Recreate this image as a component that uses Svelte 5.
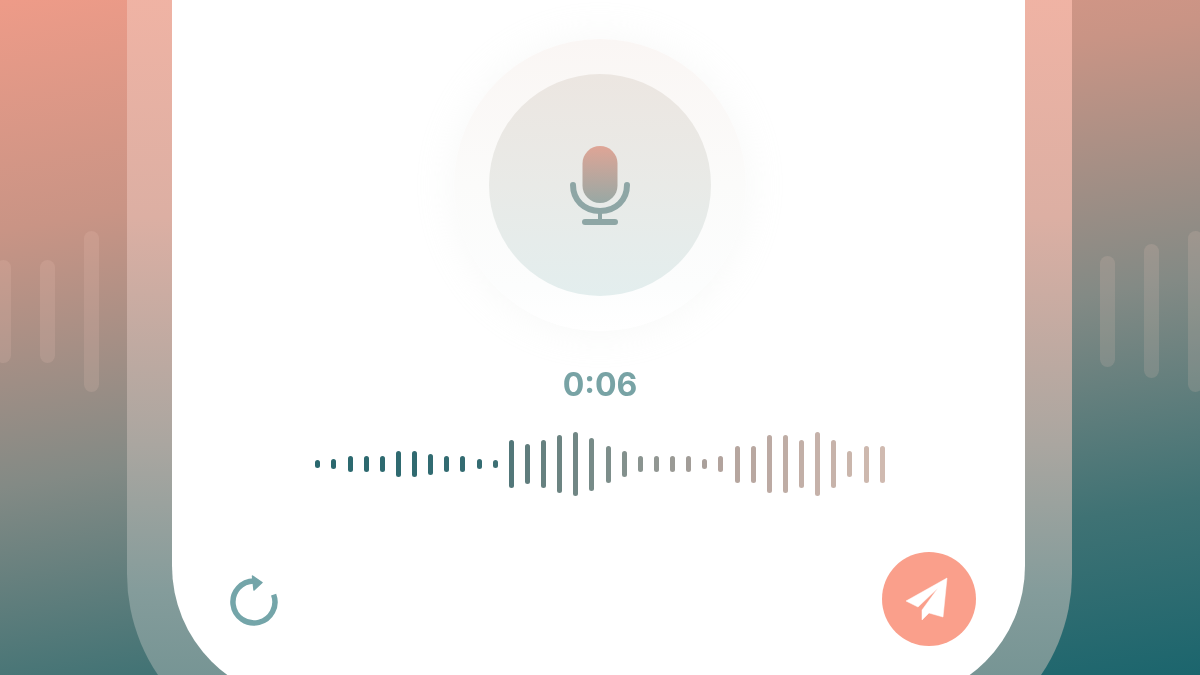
<script lang="ts">
  const leftBars = [103, 103, 161];
  const rightBars = [111, 134, 161];
  const wave = [
    8, 10, 16, 16, 16, 26, 26, 21, 16, 16, 10, 8, 48, 40, 48, 58, 64, 53, 37, 26, 16, 16, 16, 16, 10, 16,
    37, 37, 58, 58, 48, 64, 48, 26, 37, 37
  ];

  // colour stops along the waveform, teal to dusty pink
  const stops = [
    [0, 42, 104, 110],
    [0.3, 52, 108, 114],
    [0.36, 94, 124, 124],
    [0.55, 132, 146, 142],
    [0.72, 180, 164, 158],
    [1, 208, 186, 176]
  ];

  function barColor(t: number) {
    for (let i = 1; i < stops.length; i++) {
      const a = stops[i - 1];
      const b = stops[i];
      if (t <= b[0]) {
        const k = (t - a[0]) / (b[0] - a[0]);
        const c = [1, 2, 3].map((n) => Math.round(a[n] + (b[n] - a[n]) * k));
        return `rgb(${c.join(",")})`;
      }
    }
    return "#d0bab0";
  }
</script>

<div class="stage">
  <div class="side left">
    {#each leftBars as h}
      <span class="side-bar" style="height: {h}px"></span>
    {/each}
  </div>

  <div class="phone">
    <div class="screen">
      <div class="halo">
        <div class="circle">
          <svg class="mic" width="60" height="84" viewBox="0 0 60 84" fill="none">
            <defs>
              <linearGradient id="capsule" x1="0" y1="0" x2="0" y2="1">
                <stop offset="0" stop-color="#dfa596" />
                <stop offset="1" stop-color="#98a8a4" />
              </linearGradient>
            </defs>
            <rect x="12.5" y="2" width="35" height="57" rx="17.5" fill="url(#capsule)" />
            <path d="M3 41 C3 56 14 67 30 67 C46 67 57 56 57 41" stroke="#8ea6a5" stroke-width="6" stroke-linecap="round" />
            <path d="M30 67 V78" stroke="#8ea6a5" stroke-width="4" />
            <path d="M15 78 H45" stroke="#8ea6a5" stroke-width="6" stroke-linecap="round" />
          </svg>
        </div>
      </div>

      <div class="timer">0:06</div>

      <div class="wave">
        {#each wave as h, i}
          <span class="wave-bar" style="height: {h}px; background: {barColor(i / (wave.length - 1))}"></span>
        {/each}
      </div>

      <div class="actions">
        <button class="restart" aria-label="Restart">
          <svg width="50" height="58" viewBox="0 0 50 58" fill="none">
            <path d="M44.6 22.6 A21 21 0 1 1 25 9" stroke="#74a5a9" stroke-width="5.5" />
            <path d="M23.5 4 L33 10.5 L25 18 Z" fill="#74a5a9" stroke="#74a5a9" stroke-width="1.5" stroke-linejoin="round" />
          </svg>
        </button>
        <button class="send" aria-label="Send">
          <svg width="94" height="94" viewBox="0 0 94 94">
            <path d="M65 26 L24 49 L36 55 L56 36 L40 58 L40 68 L47 61 L61 65 Z" fill="#fff" stroke="#fff" stroke-width="0.5" stroke-linejoin="round" />
          </svg>
        </button>
      </div>
    </div>
  </div>

  <div class="side right">
    {#each rightBars as h}
      <span class="side-bar" style="height: {h}px"></span>
    {/each}
  </div>
</div>

<style>
  :global(body) {
    margin: 0;
  }

  .stage {
    width: 1200px;
    height: 675px;
    overflow: hidden;
    display: flex;
    background: linear-gradient(170deg, #ee9b88 0%, #c99485 26%, #838a85 55%, #3f7274 80%, #1b656d 100%);
  }

  .side {
    min-width: 0;
    height: 622px;
    display: flex;
    align-items: center;
    gap: 29px;
    overflow: hidden;
  }

  .side.left {
    flex: 0 0 127px;
    justify-content: flex-end;
    box-sizing: border-box;
    padding-right: 28px;
  }

  .side.right {
    flex: 1;
    justify-content: flex-start;
    padding-left: 28px;
  }

  .side-bar {
    flex: none;
    width: 15px;
    border-radius: 8px;
    background: rgba(255, 215, 195, 0.14);
  }

  .phone {
    flex: none;
    width: 853px;
    height: 716px;
    margin-top: -60px;
    padding: 45px 47px 53px 45px;
    border-radius: 0 0 180px 180px;
    background: linear-gradient(180deg, #f5b4a4 0%, #dcafa3 34%, #aaa6a0 62%, #849c9b 80%, #6a8e8e 100%);
  }

  .screen {
    height: 100%;
    box-sizing: border-box;
    padding: 54px 0 0 3px;
    background: #fff;
    border-radius: 0 0 135px 135px;
    display: flex;
    flex-direction: column;
    align-items: center;
    font-family: "Inter", sans-serif;
  }

  .halo {
    width: 292px;
    height: 292px;
    border-radius: 50%;
    display: flex;
    align-items: center;
    justify-content: center;
    background: linear-gradient(180deg, #faf6f4 0%, #fbfbfa 50%, #fcfdfd 85%, #fff 100%);
    box-shadow: 0 0 40px rgba(228, 232, 230, 0.3);
  }

  .circle {
    width: 222px;
    height: 222px;
    border-radius: 50%;
    display: flex;
    align-items: center;
    justify-content: center;
    background: linear-gradient(180deg, #ece6e1 0%, #e9eae7 50%, #e3eeee 100%);
  }

  .mic {
    margin-top: 1px;
    filter: blur(0.4px);
  }

  .timer {
    margin-top: 34px;
    height: 40px;
    line-height: 40px;
    font-size: 32px;
    font-weight: 700;
    color: #78a3a5;
    filter: blur(0.4px);
  }

  .wave {
    margin-top: 27px;
    height: 64px;
    display: flex;
    align-items: center;
    gap: 11.13px;
    filter: blur(0.4px);
  }

  .wave-bar {
    width: 5px;
    border-radius: 3px;
  }

  .actions {
    align-self: stretch;
    margin-top: 56px;
    padding: 0 49px 0 54px;
    display: flex;
    align-items: center;
    justify-content: space-between;
  }

  .actions button {
    padding: 0;
    border: 0;
    background: none;
    display: block;
  }

  .restart {
    margin-top: 4px;
    filter: blur(0.4px);
  }

  .restart svg {
    display: block;
  }

  .send {
    width: 94px;
    height: 94px;
    border-radius: 50%;
    background: #fa9f8b !important;
  }

  .send svg {
    display: block;
  }
</style>
